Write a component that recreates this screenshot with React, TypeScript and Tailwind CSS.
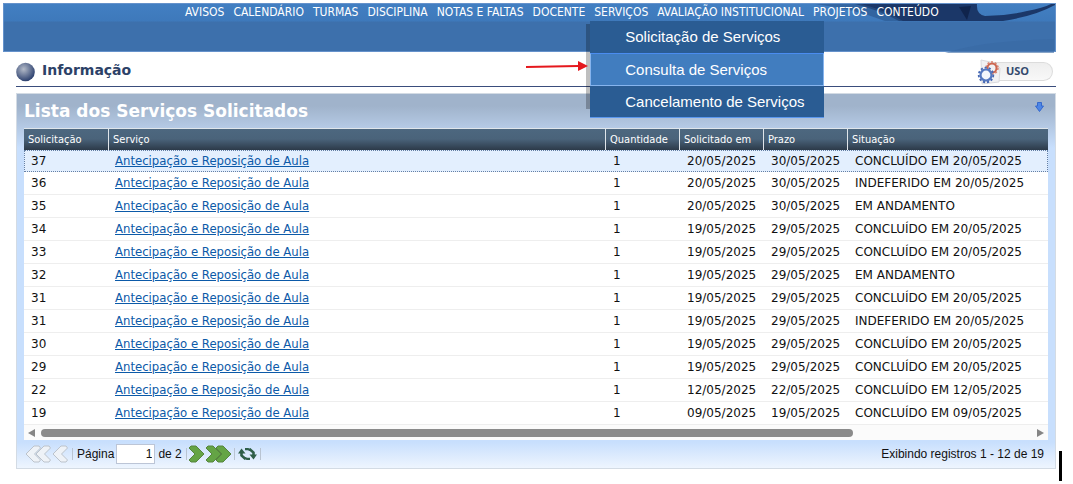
import React from "react";

const menu = [
  "AVISOS",
  "CALENDÁRIO",
  "TURMAS",
  "DISCIPLINA",
  "NOTAS E FALTAS",
  "DOCENTE",
  "SERVIÇOS",
  "AVALIAÇÃO INSTITUCIONAL",
  "PROJETOS",
  "CONTEÚDO",
];

const rows = [
  ["37", "20/05/2025", "30/05/2025", "CONCLUÍDO EM 20/05/2025"],
  ["36", "20/05/2025", "30/05/2025", "INDEFERIDO EM 20/05/2025"],
  ["35", "20/05/2025", "30/05/2025", "EM ANDAMENTO"],
  ["34", "19/05/2025", "29/05/2025", "CONCLUÍDO EM 20/05/2025"],
  ["33", "19/05/2025", "29/05/2025", "CONCLUÍDO EM 20/05/2025"],
  ["32", "19/05/2025", "29/05/2025", "EM ANDAMENTO"],
  ["31", "19/05/2025", "29/05/2025", "CONCLUÍDO EM 20/05/2025"],
  ["31", "19/05/2025", "29/05/2025", "INDEFERIDO EM 20/05/2025"],
  ["30", "19/05/2025", "29/05/2025", "CONCLUÍDO EM 20/05/2025"],
  ["29", "19/05/2025", "29/05/2025", "CONCLUÍDO EM 20/05/2025"],
  ["22", "12/05/2025", "22/05/2025", "CONCLUÍDO EM 12/05/2025"],
  ["19", "09/05/2025", "19/05/2025", "CONCLUÍDO EM 09/05/2025"],
];

const columns = ["Solicitação", "Serviço", "Quantidade", "Solicitado em", "Prazo", "Situação"];

function Submenu() {
  return (
    <div className="absolute -left-1 top-[17px] z-10 w-[234px] font-['Liberation_Sans',sans-serif] text-[15px] text-white">
      <div className="absolute -left-1 top-[3px] -z-10 h-[85px] w-5 bg-black/25" />
      <a href="#solicitacao" className="flex h-8 items-center bg-[#2a5c93] pl-[35px]">
        Solicitação de Serviços
      </a>
      <a
        href="#consulta"
        className="flex h-[33px] items-center border border-[#86b4ee] border-t-[#4a8cf0] bg-[#417dbf] pl-[34px]"
      >
        Consulta de Serviços
      </a>
      <a href="#cancelamento" className="flex h-8 items-center border-b border-[#5b97ee] bg-[#2a5c93] pl-[35px]">
        Cancelamento de Serviços
      </a>
      <svg className="absolute -left-16 top-[38px]" width="64" height="14" viewBox="0 0 64 14">
        <path d="M0 8 L52 7" stroke="#e5181d" strokeWidth="2" />
        <path d="M52 2 L62 7 L52 12 Z" fill="#e5181d" />
      </svg>
    </div>
  );
}

function HeaderArt() {
  return (
    <svg className="absolute right-0 top-0" width="260" height="49" viewBox="0 0 260 49">
      <path d="M60 0 H182 Q181 10 190 12 Q212 12 232 7 Q248 4 256 0 H260 V1 Q240 12 208 17 H104 Q84 6 60 0Z" fill="#1b3768" />
      <path d="M20 0 H66 Q90 6 108 17 H90 Q60 5 20 0Z" fill="#2a558c" opacity=".6" />
      <path d="M164 3 L172 16 L176 2Z" fill="#10244c" />
      <path d="M150 49 Q185 37 259 35 V49Z" fill="#3869a3" opacity=".6" />
    </svg>
  );
}

function GearsIcon() {
  return (
    <svg width="24" height="26" viewBox="0 0 24 26">
      <path d="M4 1 L18 4 L23 9 L22 23 L5 25Z" fill="#f1f1f3" stroke="#dadade" />
      <circle cx="15" cy="9" r="4.5" fill="none" stroke="#cc6650" strokeWidth="2" />
      <circle cx="15" cy="9" r="6" fill="none" stroke="#d9806c" strokeWidth="1.5" strokeDasharray="2 1.8" />
      <circle cx="9" cy="16" r="5.5" fill="#f4f6fc" stroke="#5578c0" strokeWidth="2.2" />
      <circle cx="9" cy="16" r="7.3" fill="none" stroke="#4668b4" strokeWidth="1.8" strokeDasharray="2.2 1.9" />
    </svg>
  );
}

function Chevrons({ count, back = false }: { count: number; back?: boolean }) {
  const w = 17 + (count - 1) * 10;
  return (
    <svg width={w} height="18" viewBox={`0 0 ${w} 18`}>
      {Array.from({ length: count }, (_, i) => (
        <path
          key={i}
          transform={`translate(${i * 10} 0)`}
          d={back ? "M9 1 H14 L15.5 3 L9.5 9 L15.5 15 L14 17 H9 L1 9Z" : "M3 1 H8 L16 9 L8 17 H3 L1 15 L7 9 L1 3Z"}
          fill={back ? "#eef2f7" : "#64a445"}
          stroke={back ? "#bcc3cb" : "#56853f"}
          strokeLinejoin="round"
        />
      ))}
    </svg>
  );
}

const Separator = () => <span className="h-3 w-px bg-[#b9c4d2]" />;

export default function App() {
  return (
    <div className="bg-white pl-[3px] pt-[3px] font-['DejaVu_Sans',sans-serif] text-xs text-[#111]">
      <div className="mr-[17px]">
        <header className="relative h-[49px] border border-[#6592cb] bg-[linear-gradient(#427fc2_0,#3e79bb_17px,#3d70ac_18px,#3d70ac_100%)]">
          <HeaderArt />
          <nav className="relative">
            <ul className="flex h-4 items-center gap-[9px] whitespace-nowrap pl-[181px] font-['DejaVu_Sans_Condensed','DejaVu_Sans',sans-serif] text-xs leading-4 text-white">
              {menu.map((m) => (
                <li key={m} className="relative">
                  <a href="#menu">{m}</a>
                  {m === "SERVIÇOS" && <Submenu />}
                </li>
              ))}
            </ul>
          </nav>
        </header>

        <main className="pl-[13px]">
          <div className="flex h-[35px] items-center justify-between border-b border-[#3a4d7c]">
            <h1 className="flex items-center gap-[7px] pt-px text-sm font-bold text-[#2c4167]">
              <svg width="19" height="20" viewBox="0 0 19 20" className="mt-1">
                <defs>
                  <radialGradient id="ball" cx=".4" cy=".35" r=".65">
                    <stop offset="0" stopColor="#b3bac8" />
                    <stop offset="1" stopColor="#2e4270" />
                  </radialGradient>
                </defs>
                <circle cx="9.5" cy="10" r="9.3" fill="url(#ball)" />
              </svg>
              Informação
            </h1>
            <button className="relative mr-[3px] mt-1 flex h-[19px] w-[70px] items-center rounded-r-full border-y border-r border-[#dcdcdc] bg-linear-to-b from-[#eeeeee] to-[#f8f8f8] pl-[23px] font-['Open_Sans',sans-serif] text-[11px] font-bold text-[#34496d]">
              <span className="absolute -left-[6px] -top-1">
                <GearsIcon />
              </span>
              USO
            </button>
          </div>

          <section className="mt-[6px] border border-[#d3dbe4] bg-[linear-gradient(#a0b3cb_0,#a0b3cb_12px,#c8dffd_54px,#c8dffd_348px,#eef5fe_100%)] px-[7px]">
            <div className="flex h-[34px] items-center justify-between pr-1">
              <h2 className="pb-px text-[17px] leading-6 font-bold text-white">Lista dos Serviços Solicitados</h2>
              <svg width="9" height="10" viewBox="0 0 9 10" className="mb-2">
                <path d="M2.5 .5 H6.5 V4 H8.5 L4.5 9.5 L.5 4 H2.5Z" fill="#4d86e6" stroke="#3568cc" />
              </svg>
            </div>
            <table className="h-[297px] w-full table-fixed border-separate border-spacing-0 bg-white">
              <colgroup>
                <col className="w-[84px]" />
                <col />
                <col className="w-[74px]" />
                <col className="w-[84px]" />
                <col className="w-[84px]" />
                <col className="w-[201px]" />
              </colgroup>
              <thead>
                <tr className="h-[22px] bg-[linear-gradient(#4d6880_0,#4a637a_50%,#2c3a49_100%)] text-left font-['DejaVu_Sans_Condensed','DejaVu_Sans',sans-serif] text-[11px] text-white">
                  {columns.map((c) => (
                    <th key={c} className="whitespace-nowrap border-l border-t border-[#dfe5ea] p-0 pl-1 font-normal leading-4 first:border-l-0">
                      {c}
                    </th>
                  ))}
                </tr>
              </thead>
              <tbody>
                {rows.map(([id, asked, due, status], i) => (
                  <tr
                    key={i}
                    className={
                      i === 0
                        ? "bg-[#e3effe] outline-1 -outline-offset-1 outline-dotted outline-[#6580a5]"
                        : "*:border-b *:border-[#eeeeee]"
                    }
                  >
                    <td className="p-0 pl-[7px] leading-4">{id}</td>
                    <td className="p-0 pl-[7px] leading-4">
                      <a
                        href="#servico"
                        className="font-['DejaVu_Sans_Condensed','DejaVu_Sans',sans-serif] text-[13px] leading-4 text-[#0c5aa8] underline"
                      >
                        Antecipação e Reposição de Aula
                      </a>
                    </td>
                    <td className="p-0 pl-2 leading-4">1</td>
                    <td className="p-0 pl-2 leading-4">{asked}</td>
                    <td className="p-0 pl-2 leading-4">{due}</td>
                    <td className="whitespace-nowrap p-0 pl-2 leading-4">{status}</td>
                  </tr>
                ))}
              </tbody>
            </table>
            <div className="flex h-[15px] items-center bg-[#fbfbfb] px-1">
              <svg width="7" height="8" viewBox="0 0 7 8">
                <path d="M7 0 V8 L0 4Z" fill="#858585" />
              </svg>
              <div className="ml-[6px] mr-[6px] flex-1">
                <div className="h-2 w-[82%] rounded-full bg-[#8b8b8b]" />
              </div>
              <svg width="7" height="8" viewBox="0 0 7 8">
                <path d="M0 0 V8 L7 4Z" fill="#858585" />
              </svg>
            </div>
            <footer className="flex h-7 items-center justify-between pr-1 font-['Liberation_Sans',sans-serif] text-xs">
              <div className="flex items-center">
                <button aria-label="Primeira página" className="ml-px">
                  <Chevrons count={2} back />
                </button>
                <button aria-label="Página anterior" className="mr-[3px]">
                  <Chevrons count={1} back />
                </button>
                <Separator />
                <label htmlFor="page" className="ml-1">
                  Página
                </label>
                <input
                  id="page"
                  defaultValue="1"
                  className="ml-[2px] h-5 w-[39px] border border-[#bcc5d6] bg-white pr-[2px] text-right"
                />
                <span className="ml-[3px] mr-1">de 2</span>
                <Separator />
                <button aria-label="Próxima página" className="ml-px">
                  <Chevrons count={1} />
                </button>
                <button aria-label="Última página" className="mr-[2px]">
                  <Chevrons count={2} />
                </button>
                <Separator />
                <button aria-label="Atualizar" className="mx-[3px]">
                  <svg width="19" height="16" viewBox="0 0 19 16" fill="none" stroke="#2f5f49" strokeWidth="2.6">
                    <path d="M7.5 13 L3.5 9.5 V6" />
                    <path d="M11.5 3 L15.5 6.5 V10" />
                    <path d="M7 3.2 H10 L12.5 4" strokeWidth="2.2" />
                    <path d="M12 12.8 H9 L6.5 12" strokeWidth="2.2" />
                    <path d="M0 7.5 L3.5 2.5 L7.5 7.5Z M11.5 8.5 L15.5 13.5 L19 8.5Z" fill="#2f5f49" stroke="none" />
                  </svg>
                </button>
                <Separator />
              </div>
              <span>Exibindo registros 1 - 12 de 19</span>
            </footer>
          </section>
        </main>
      </div>
      <div className="-mt-[18px] mr-[11px] h-[30px] w-[3px] justify-self-end bg-black" />
    </div>
  );
}
